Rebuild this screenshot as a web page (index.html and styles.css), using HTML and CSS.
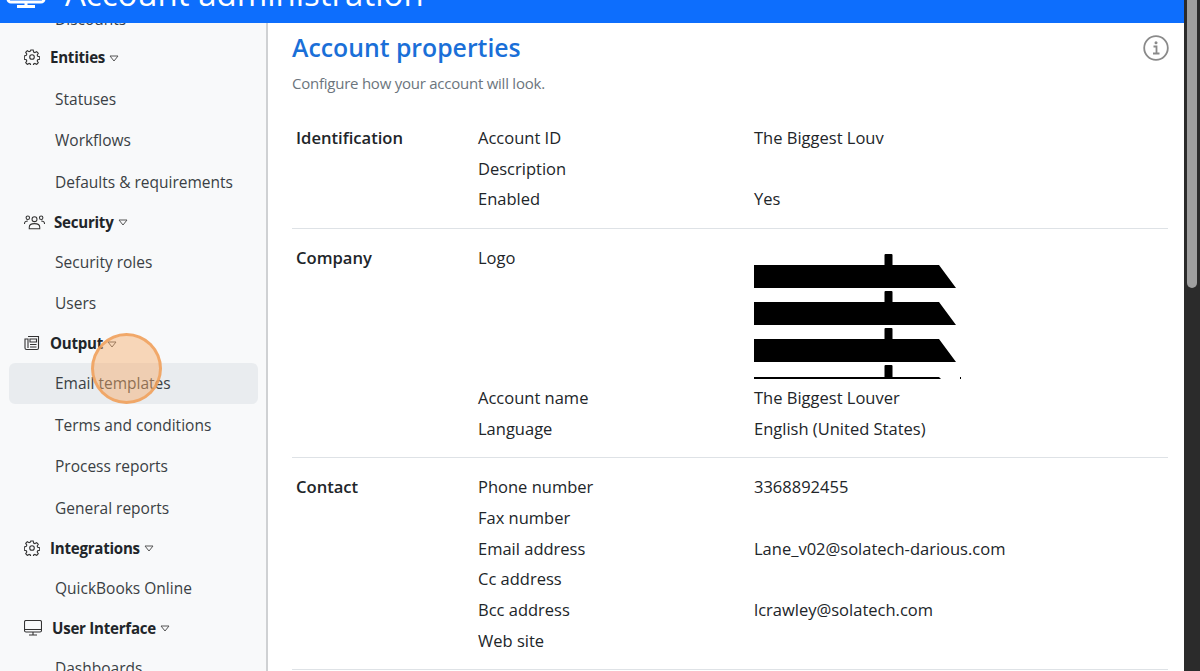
FILE: index.html
```html
<!DOCTYPE html>
<html lang="en">
<head>
<meta charset="utf-8">
<title>Account administration</title>
<link rel="stylesheet" href="styles.css">
</head>
<body>
<div class="page">
  <div class="app">
    <header class="topbar">
      <svg class="top-icon" viewBox="0 0 42 30" width="42" height="30"><path d="M3 1h36v20a3 3 0 0 1-3 3H6a3 3 0 0 1-3-3z" fill="none" stroke="#fff" stroke-width="3"/><path d="M21 24v5M12 28.500h18" stroke="#fff" stroke-width="3" fill="none"/></svg>
      <span class="top-title">Account administration</span>
    </header>
    <div class="body">
      <nav class="sidebar">
        <div class="nav-list">
          <a class="item">Discounts</a>
          <div class="group first"><svg class="gi" viewBox="0 0 16 16"><use href="#gear"/></svg><b>Entities</b><svg class="caret" viewBox="0 0 10 7"><use href="#caret"/></svg></div>
          <a class="item">Statuses</a>
          <a class="item">Workflows</a>
          <a class="item">Defaults &amp; requirements</a>
          <div class="group wide"><svg class="gi people" viewBox="0 0 22 16"><circle cx="11" cy="5" r="2.600"/><path d="M5.500 15v-1.500c0-2.600 2.400-3.800 5.500-3.800s5.500 1.200 5.500 3.800V15z"/><circle cx="4" cy="3.500" r="1.800"/><circle cx="18" cy="3.500" r="1.800"/><path d="M.5 10c0-2 1.500-3 3.500-3M21.500 10c0-2-1.500-3-3.500-3"/></svg><b>Security</b><svg class="caret" viewBox="0 0 10 7"><use href="#caret"/></svg></div>
          <a class="item">Security roles</a>
          <a class="item">Users</a>
          <div class="group"><svg class="gi" viewBox="0 0 16 16"><path d="M4 1.500h10.500v11.500a1.500 1.500 0 0 1-1.500 1.500H2.500A1.500 1.500 0 0 1 1 13V4h3v9"/><path d="M6 4h6.500v3H6zM6 9.500h6.500M6 12h6.500"/></svg><b>Output</b><svg class="caret" viewBox="0 0 10 7"><use href="#caret"/></svg></div>
          <a class="item active">Email templates</a>
          <a class="item">Terms and conditions</a>
          <a class="item">Process reports</a>
          <a class="item">General reports</a>
          <div class="group"><svg class="gi" viewBox="0 0 16 16"><use href="#gear"/></svg><b>Integrations</b><svg class="caret" viewBox="0 0 10 7"><use href="#caret"/></svg></div>
          <a class="item">QuickBooks Online</a>
          <div class="group wider"><svg class="gi monitor" viewBox="0 0 18 16"><rect x=".5" y=".5" width="17" height="11.500" rx="1.500"/><path d="M.5 9.500h17M9 12v3M5 15h8"/></svg><b>User Interface</b><svg class="caret" viewBox="0 0 10 7"><use href="#caret"/></svg></div>
          <a class="item">Dashboards</a>
        </div>
      </nav>
      <main class="main">
        <div class="head">
          <h1>Account properties</h1>
          <svg class="info" viewBox="0 0 26 26" width="26" height="26"><circle cx="13" cy="13" r="11.800"/><path d="M10.500 11.500h3v7M10 18.500h6.500"/><circle class="dot" cx="13" cy="7.800" r="1.500"/></svg>
        </div>
        <p class="sub">Configure how your account will look.</p>
        <section class="props">
          <h2>Identification</h2>
          <div class="rows">
            <div class="row"><span>Account ID</span><span>The Biggest Louv</span></div>
            <div class="row"><span>Description</span><span></span></div>
            <div class="row"><span>Enabled</span><span>Yes</span></div>
          </div>
        </section>
        <section class="props">
          <h2>Company</h2>
          <div class="rows">
            <div class="row logo-row"><span>Logo</span>
              <svg class="logo" viewBox="0 0 210 125" width="210" height="125"><path d="M0 11h185l17 23H0zM0 48h185l17 23H0zM0 85h185l17 23H0zM0 123h185l2 2H0z"/><path d="M130.500 11V1a1 1 0 0 1 1-1h6a1 1 0 0 1 1 1v10zM130.500 48V38a1 1 0 0 1 1-1h6a1 1 0 0 1 1 1v11zM130.500 85V75a1 1 0 0 1 1-1h6a1 1 0 0 1 1 1v11zM130.500 123v-11a1 1 0 0 1 1-1h6a1 1 0 0 1 1 1v11zM206 123h1v2h-1z"/></svg>
            </div>
            <div class="row"><span>Account name</span><span>The Biggest Louver</span></div>
            <div class="row"><span>Language</span><span>English (United States)</span></div>
          </div>
        </section>
        <section class="props">
          <h2>Contact</h2>
          <div class="rows">
            <div class="row"><span>Phone number</span><span>3368892455</span></div>
            <div class="row"><span>Fax number</span><span></span></div>
            <div class="row"><span>Email address</span><span>Lane_v02@solatech-darious.com</span></div>
            <div class="row"><span>Cc address</span><span></span></div>
            <div class="row"><span>Bcc address</span><span>lcrawley@solatech.com</span></div>
            <div class="row"><span>Web site</span><span></span></div>
          </div>
        </section>
      </main>
    </div>
  </div>
  <div class="scrollbar"><div class="thumb"></div></div>
  <div class="click-marker"></div>
</div>
<svg class="defs" width="0" height="0"><defs><path id="caret" d="M1 1h8L5 6z" fill="none" stroke="#555" stroke-width="1" stroke-linejoin="round"/><g id="gear"><circle cx="8" cy="8" r="2.300"/><path d="M6.800 1h2.400l.4 2 1.300.6 1.800-1 1.600 1.700-1.100 1.700.5 1.300 2 .5v2.400l-2 .5-.5 1.300 1.100 1.700-1.600 1.700-1.800-1-1.300.6-.4 2H6.800l-.4-2-1.300-.6-1.800 1-1.600-1.700 1.100-1.700-.5-1.300-2-.5V6.900l2-.5.500-1.300L1.700 3.400l1.600-1.700 1.800 1 1.300-.6z"/></g></defs></svg>
</body>
</html>
```

FILE: styles.css
```css
* { box-sizing: border-box; }
html, body { margin: 0; height: 100%; overflow: hidden; background: #fff; }
body { font-family: "Open Sans", "Noto Sans", sans-serif; color: #212529; }
.page { position: relative; display: flex; width: 1200px; height: 671px; overflow: hidden; }
.app { flex: 1; min-width: 0; display: flex; flex-direction: column; }
.scrollbar { width: 16px; background: #2b2b2b; padding: 0 3px; }
.thumb { width: 10px; height: 288px; background: #9f9f9f; border-radius: 0 0 5px 5px; }
.topbar { height: 23px; background: #0d6efd; flex: none; display: flex; align-items: flex-end; padding-left: 5px; gap: 18px; overflow: hidden; color: #fff; }
.top-icon { flex: none; margin-bottom: 15px; }
.top-title { font-size: 33px; line-height: 44px; margin-bottom: 7.500px; white-space: nowrap; }
.body { flex: 1; min-height: 0; display: flex; }
.sidebar { width: 268px; flex: none; background: #f8f9fa; border-right: 2px solid #cfd1d3; overflow: hidden; font-size: 15.500px; }
.nav-list { margin-top: -25px; padding: 0 8px 0 9px; }
.item { display: flex; align-items: center; height: 41.500px; padding-left: 46px; color: #3a3f44; border-radius: 6px; white-space: nowrap; }
.item.active { background: #e9ecef; }
.group { display: flex; align-items: center; height: 38.500px; padding-left: 15px; color: #212529; white-space: nowrap; }
.group.first { margin-top: -1.500px; margin-bottom: 1.500px; }
.group b { font-size: 15.100px; font-weight: 700; letter-spacing: -.25px; margin-left: 10px; }
.gi { width: 16px; height: 16px; flex: none; fill: none; stroke: #333; stroke-width: 1.100; }
.gi.people { width: 21px; }
.group.wide b { margin-left: 9px; }
.gi.monitor { width: 18px; }
.caret { width: 10px; height: 7px; flex: none; margin-left: 4px; margin-top: 2px; }
.main { flex: 1; min-width: 0; padding: 0 16px 0 24px; overflow: hidden; }
.head { display: flex; justify-content: space-between; align-items: center; height: 50px; }
.head h1 { margin: 0 0 3px; font-size: 24.800px; font-weight: 600; color: #1a6fd8; }
.info { fill: none; stroke: #8a8a8a; stroke-width: 1.800; margin-right: -.5px; }
.info .dot { fill: #8a8a8a; stroke: none; }
.sub { margin: -1px 0 0; font-size: 15px; letter-spacing: -.24px; line-height: 22px; color: #6c757d; height: 37px; }
.props { display: flex; padding: 14px 4px 12.600px; border-bottom: 1px solid #dee2e6; font-size: 16.500px; color: #212529; }
.props h2 { width: 182px; flex: none; margin: 0; font-size: 16.600px; font-weight: 600; line-height: 30.700px; }
.rows { flex: 1; }
.row { display: flex; line-height: 30.700px; }
.row > span:first-child { width: 276px; flex: none; }
.logo-row { height: 140.500px; }
.logo { display: block; margin-top: 11.400px; fill: #000; }
.click-marker { position: absolute; left: 91px; top: 333px; width: 71px; height: 71px; border-radius: 50%; background: rgba(247, 170, 105, .45); border: 3px solid rgba(240, 160, 90, .85); }
.defs { position: absolute; }
```
